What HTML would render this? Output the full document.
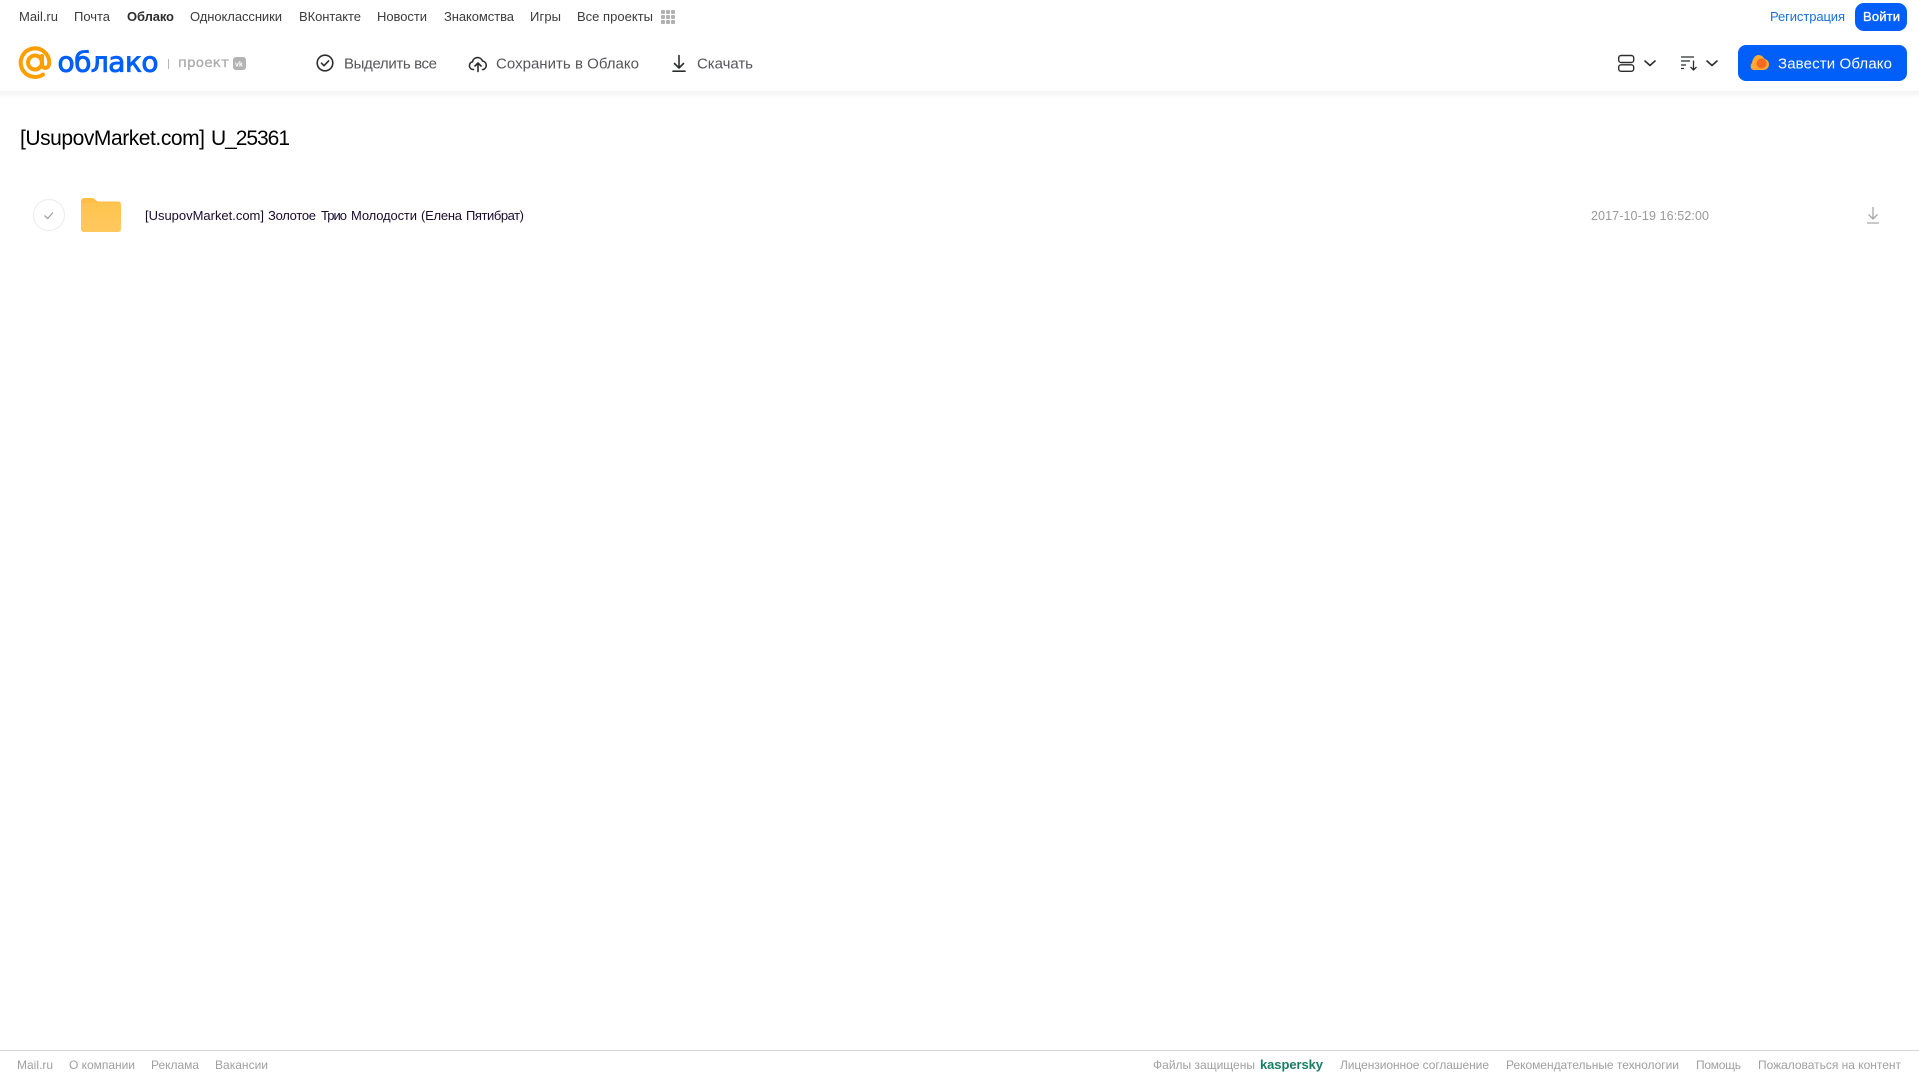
<!DOCTYPE html>
<html lang="ru">
<head>
<meta charset="utf-8">
<title>Облако</title>
<style>
html,body{margin:0;padding:0;background:#fff;width:1919px;height:1079px;overflow:hidden}
svg{display:block;position:absolute;left:0;top:0}
text{font-family:"Liberation Sans",Arial,sans-serif;white-space:pre}
.n{font-size:13px;fill:#3a3b3d}
.t{font-size:15px;fill:#55565a}
.f{font-size:12px;fill:#a0a0a0}
.r{font-size:13px;fill:#1a0b2e}
.i{fill:none;stroke:#2c2d2e;stroke-width:1.6;stroke-linecap:round;stroke-linejoin:round}
</style>
</head>
<body>
<svg width="1919" height="1079" viewBox="0 0 1919 1079" xmlns="http://www.w3.org/2000/svg">
<defs>
<linearGradient id="sh" x1="0" y1="0" x2="0" y2="1"><stop offset="0" stop-color="#f3f3f3"/><stop offset="1" stop-color="#fff"/></linearGradient>
<linearGradient id="fo" x1="0" y1="0" x2="0" y2="1"><stop offset="0" stop-color="#ffc44f"/><stop offset="1" stop-color="#ffc85f"/></linearGradient>
</defs>
<rect width="1919" height="1079" fill="#fff"/>
<rect x="0" y="91" width="1919" height="8" fill="url(#sh)"/>

<!-- top nav -->
<text class="n" x="19" y="21" textLength="39">Mail.ru</text>
<text class="n" x="74" y="21" textLength="36">Почта</text>
<text class="n" x="127" y="21" textLength="47" font-weight="700" style="fill:#2c2d2e">Облако</text>
<text class="n" x="190" y="21" textLength="92">Одноклассники</text>
<text class="n" x="299" y="21" textLength="62">ВКонтакте</text>
<text class="n" x="377" y="21" textLength="50">Новости</text>
<text class="n" x="444" y="21" textLength="70">Знакомства</text>
<text class="n" x="530" y="21" textLength="31">Игры</text>
<text class="n" x="577" y="21" textLength="76">Все проекты</text>
<g fill="#b0b0b0">
<rect x="661" y="10" width="4" height="4" rx="1"/><rect x="666" y="10" width="4" height="4" rx="1"/><rect x="671" y="10" width="4" height="4" rx="1"/>
<rect x="661" y="15" width="4" height="4" rx="1"/><rect x="666" y="15" width="4" height="4" rx="1"/><rect x="671" y="15" width="4" height="4" rx="1"/>
<rect x="661" y="20" width="4" height="4" rx="1"/><rect x="666" y="20" width="4" height="4" rx="1"/><rect x="671" y="20" width="4" height="4" rx="1"/>
</g>

<text class="n" x="1770" y="21" textLength="75" style="fill:#1a6fe0">Регистрация</text>
<rect x="1855" y="3" width="52" height="28" rx="9" fill="#005ff9"/>
<text x="1863" y="21" font-size="13" fill="#fff" stroke="#fff" stroke-width=".35" textLength="37">Войти</text>

<!-- logo -->
<g fill="none" stroke="#ff9e00" stroke-width="4" stroke-linecap="round">
<circle cx="35" cy="62.500" r="7"/>
<path d="M42 56v8c0 5.500 7.300 5.500 7.300-1.500a14.300 14.300 0 1 0-6.300 12"/>
</g>
<text x="57.500" y="71.500" font-size="28" fill="#005ff9" stroke="#005ff9" stroke-width=".9" textLength="101" style="font-family:'DejaVu Sans','Liberation Sans',sans-serif">облако</text>
<rect x="168" y="59" width="1" height="10" fill="#b5b5b5"/>
<text x="178" y="67" font-size="13.500" fill="#ababab" stroke="#ababab" stroke-width=".3" textLength="51" style="font-family:'DejaVu Sans','Liberation Sans',sans-serif">проект</text>
<rect x="233" y="57" width="13" height="13" rx="3" fill="#b3b3b3"/>
<text x="235" y="66.500" font-size="7" font-weight="700" fill="#fff">vk</text>

<!-- toolbar -->
<circle cx="325" cy="63" r="7.800" class="i"/>
<path d="M321.500 63.200l2.500 2.500 4.600-4.800" class="i"/>
<text class="t" x="344" y="68.500" textLength="93">Выделить все</text>

<path d="M473.500 69.500h-.5a3.900 3.900 0 0 1-.5-7.700 5.200 5.200 0 0 1 10-.8 4.400 4.400 0 0 1 .8 8.500h-.8" class="i"/>
<path d="M478 71.500v-8M475 66l3-3 3 3" class="i"/>
<text class="t" x="496" y="68.500" textLength="143">Сохранить в Облако</text>

<path d="M679 55.500v12.500M674.500 63.500l4.500 4.500 4.500-4.500M673 71.200h12" class="i"/>
<text class="t" x="697" y="68.500" textLength="56">Скачать</text>

<!-- right toolbar -->
<g fill="none" stroke="#2c2d2e" stroke-width="1.400"><rect x="1618.700" y="55.500" width="15" height="7" rx="2.400"/><rect x="1618.700" y="64.800" width="15" height="6.500" rx="2.400"/></g>
<path d="M1645 61l5 4.500 5-4.500" class="i"/>
<path d="M1681 57h13M1681 61h9M1681 65h5M1681 68.500h3" fill="none" stroke="#2c2d2e" stroke-width="1.300"/>
<path d="M1693.500 60.500v9M1690.500 67l3 3 3-3" fill="none" stroke="#2c2d2e" stroke-width="1.300"/>
<path d="M1707 61l5 4.500 5-4.500" class="i"/>

<rect x="1738" y="45" width="169" height="36" rx="8" fill="#005ff9"/>
<path d="M1754 70c-3.500 0-4.500-5-2-7 .5-4 3-8 6.500-8 3 0 5 2 6 4 3 .5 4.500 3 4.500 5.500 0 3-2.500 5.500-5.500 5.500z" fill="#ffa930"/>
<circle cx="1761.500" cy="63.500" r="5" fill="#f86a1f"/>
<text x="1778" y="68.500" font-size="15" fill="#fff" textLength="114">Завести Облако</text>

<!-- title -->
<text x="20" y="145" font-size="21" fill="#000" textLength="185">[UsupovMarket.com]</text>
<text x="211" y="145" font-size="21" fill="#000" textLength="79">U_25361</text>

<!-- row -->
<circle cx="49" cy="215" r="15.500" fill="#fff" stroke="#eeeeee" stroke-width="1.200"/>
<path d="M44.500 215.500l3.200 3 5.300-6" fill="none" stroke="#a0a0a0" stroke-width="1.300"/>
<path d="M81 201a3 3 0 0 1 3-3h8c3 0 4 3.500 6.500 3.500H118a3 3 0 0 1 3 3V229a3 3 0 0 1-3 3H84a3 3 0 0 1-3-3z" fill="#ffbf45"/>
<path d="M81 206a3 3 0 0 1 3-3h34a3 3 0 0 1 3 3v23a3 3 0 0 1-3 3H84a3 3 0 0 1-3-3z" fill="url(#fo)"/>
<text class="r" x="145" y="220" textLength="119">[UsupovMarket.com]</text>
<text class="r" x="268" y="220" textLength="48">Золотое</text>
<text class="r" x="321" y="220" textLength="26">Трио</text>
<text class="r" x="351" y="220" textLength="66">Молодости</text>
<text class="r" x="421" y="220" textLength="41">(Елена</text>
<text class="r" x="466" y="220" textLength="58">Пятибрат)</text>
<text x="1591" y="220" font-size="12.500" fill="#999" textLength="118">2017-10-19 16:52:00</text>
<path d="M1873 207v12M1868.500 214.500l4.500 4.500 4.500-4.500M1867 223h12" fill="none" stroke="#a6a6a6" stroke-width="1.300"/>

<!-- footer -->
<rect x="0" y="1050" width="1919" height="1" fill="#d4d4d4"/>
<text class="f" x="17" y="1069" textLength="36">Mail.ru</text>
<text class="f" x="69" y="1069" textLength="66">О компании</text>
<text class="f" x="151" y="1069" textLength="48">Реклама</text>
<text class="f" x="215" y="1069" textLength="53">Вакансии</text>
<text class="f" x="1153" y="1069" textLength="102">Файлы защищены</text>
<text x="1260" y="1069" font-size="13" font-weight="700" fill="#1a7d66" textLength="63">kaspersky</text>
<text class="f" x="1340" y="1069" textLength="149">Лицензионное соглашение</text>
<text class="f" x="1506" y="1069" textLength="173">Рекомендательные технологии</text>
<text class="f" x="1696" y="1069" textLength="45">Помощь</text>
<text class="f" x="1758" y="1069" textLength="143">Пожаловаться на контент</text>
</svg>
</body>
</html>
